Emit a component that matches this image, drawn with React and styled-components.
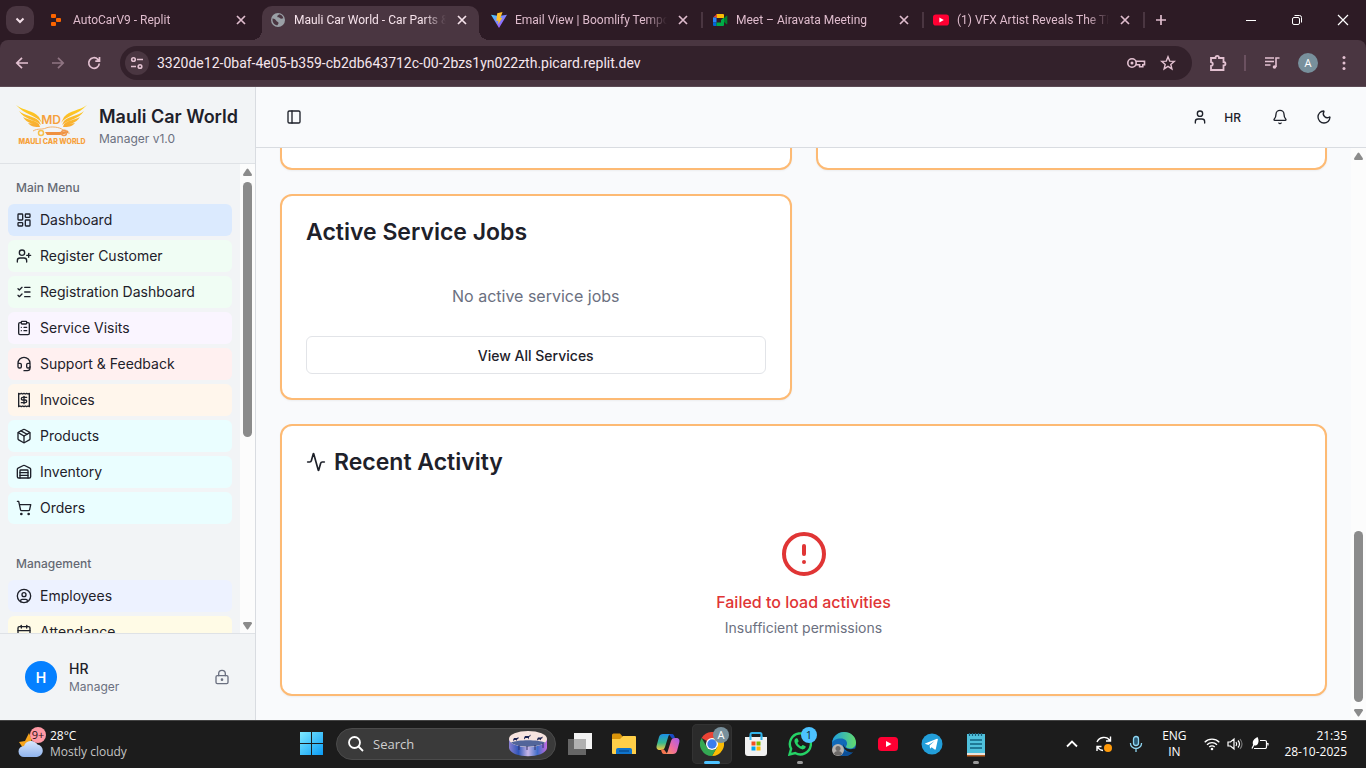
import React from "react";
import styled, { createGlobalStyle, css } from "styled-components";
import {
  LayoutDashboard, UserPlus, ListChecks, ClipboardList, Headset, Receipt, Package,
  Warehouse, ShoppingCart, CircleUser, Calendar, LockKeyhole, PanelLeft, User, Bell,
  Moon, Activity, CircleAlert,
} from "lucide-react";

const GlobalStyle = createGlobalStyle`
  *, *::before, *::after { box-sizing: border-box; }
  body { margin: 0; background: #1c1c1c; }
  h1, h2, p, ul { margin: 0; padding: 0; }
  ul { list-style: none; }
  button { border: 0; background: none; padding: 0; font: inherit; color: inherit; cursor: pointer; }
  a { color: inherit; text-decoration: none; }
  svg { display: block; flex: none; }
`;

const systemFont = `"Open Sans", "Noto Sans", sans-serif`;
const browserFont = `Roboto, "Open Sans", sans-serif`;
const appFont = `Inter, "Liberation Sans", sans-serif`;

const Screen = styled.div`
  display: flex;
  flex-direction: column;
  height: 100vh;
  overflow: hidden;
  background: #2d1b25;
  font-family: ${systemFont};
`;

/* ---------- browser chrome ---------- */

const TabStrip = styled.div`
  display: flex;
  align-items: center;
  flex: none;
  height: 40px;
  padding-left: 6px;
  background: #2d1b25;
  color: #dfbccd;
  font-family: ${browserFont};
`;

const TabSearch = styled.button`
  display: grid;
  place-items: center;
  width: 28px;
  height: 28px;
  margin-right: 7px;
  border-radius: 10px;
  background: #4a3641;
  color: #f3dfe8;
`;

const Tabs = styled.div`
  display: flex;
  align-self: flex-end;
  gap: 4px;
`;

const flare = css`
  content: "";
  position: absolute;
  bottom: 0;
  width: 10px;
  height: 10px;
`;

const TabItem = styled.div`
  position: relative;
  display: flex;
  align-items: center;
  gap: 8px;
  width: 217px;
  height: 34px;
  padding: 0 9px 6px 8px;
  border-radius: 10px 10px 0 0;
  font-size: 12px;
  ${({ $active }) =>
    $active
      ? css`
          background: #4a3641;
          color: #f6e3eb;
          &::before {
            ${flare}
            left: -10px;
            background: radial-gradient(circle at 0 0, transparent 10px, #4a3641 10px);
          }
          &::after {
            ${flare}
            right: -10px;
            background: radial-gradient(circle at 100% 0, transparent 10px, #4a3641 10px);
          }
        `
      : ""}
  ${({ $divided }) =>
    $divided
      ? css`
          &::after {
            content: "";
            position: absolute;
            right: -3px;
            top: 6px;
            width: 2px;
            height: 16px;
            background: #4a3641;
          }
        `
      : ""}
`;

const TabTitle = styled.span`
  flex: 1;
  min-width: 0;
  overflow: hidden;
  white-space: nowrap;
  line-height: 16px;
  mask-image: linear-gradient(to right, #000 calc(100% - 22px), transparent);
`;

const PlainButton = styled.button`
  display: grid;
  place-items: center;
  width: ${({ $w }) => $w || 28}px;
  height: ${({ $h }) => $h || 28}px;
  opacity: ${({ disabled }) => (disabled ? 0.45 : 1)};
`;

const NewTab = styled(PlainButton)`
  margin-left: 5px;
`;

const WindowControls = styled.div`
  display: flex;
  margin-left: auto;
  color: #fff;
`;

const Toolbar = styled.div`
  display: flex;
  align-items: center;
  flex: none;
  height: 47px;
  padding: 0 8px;
  border-bottom: 1px solid #5c4a54;
  border-radius: 8px 8px 0 0;
  background: #4a3641;
  color: #e3c1d1;
`;

const NavButtons = styled.div`
  display: flex;
  gap: 8px;
  margin-right: 12px;
`;

const Omnibox = styled.div`
  display: flex;
  align-items: center;
  flex: 1;
  height: 34px;
  padding: 0 12px 0 5px;
  border-radius: 17px;
  background: #33212b;
  gap: 8px;
`;

const SiteInfo = styled.button`
  display: grid;
  place-items: center;
  width: 24px;
  height: 24px;
  border-radius: 50%;
  background: #4a3641;
`;

const UrlInput = styled.input`
  flex: 1;
  min-width: 0;
  padding: 0;
  border: 0;
  outline: 0;
  background: none;
  color: #f6e6ed;
  font: 14px/20px ${browserFont};
`;

const OmniboxActions = styled.div`
  display: flex;
  gap: 8px;
`;

const ToolbarActions = styled.div`
  display: flex;
  align-items: center;
  gap: 8px;
  margin-left: 12px;
`;

const ToolbarDivider = styled.span`
  width: 2px;
  height: 16px;
  margin: 0 4px;
  background: #6b5160;
`;

const ProfileBadge = styled.span`
  display: grid;
  place-items: center;
  width: 20px;
  height: 20px;
  border-radius: 50%;
  background: #78909c;
  color: #fff;
  font-size: 11px;
  line-height: 20px;
`;

/* ---------- application ---------- */

const AppArea = styled.div`
  display: flex;
  flex: 1;
  min-height: 0;
  background: #f9fafc;
  color: #1e212a;
  font-family: ${appFont};
`;

const Sidebar = styled.aside`
  display: flex;
  flex-direction: column;
  flex: none;
  width: 256px;
  border-right: 1px solid #d9dce1;
  background: #f2f4f6;
`;

const Brand = styled.header`
  display: flex;
  align-items: center;
  gap: 11px;
  padding: 16px;
  border-bottom: 1px solid #dfe2e6;
  white-space: nowrap;
`;

const BrandName = styled.h1`
  font-size: 18px;
  line-height: 28px;
  font-weight: 600;
`;

const Caption = styled.p`
  font-size: 12px;
  line-height: 16px;
  color: #6b7080;
`;

const SidebarBody = styled.div`
  display: flex;
  flex: 1;
  min-height: 0;
`;

const MenuViewport = styled.nav`
  display: flex;
  flex-direction: column;
  flex: 1;
  gap: 8px;
  overflow: hidden;
`;

const MenuGroup = styled.section`
  flex: none;
  padding: 8px;
`;

const MenuHeading = styled.h2`
  padding: 0 8px;
  font-size: 12px;
  line-height: 32px;
  font-weight: 500;
  color: #656973;
`;

const MenuList = styled.ul`
  display: flex;
  flex-direction: column;
  gap: 4px;
`;

const MenuLink = styled.a`
  display: flex;
  align-items: center;
  gap: 8px;
  height: 32px;
  padding: 0 8px;
  border-radius: 6px;
  background: ${({ $tint }) => $tint};
  font-size: 14px;
  line-height: 20px;
`;

const Account = styled.footer`
  display: flex;
  align-items: center;
  gap: 12px;
  padding: 25px;
  border-top: 1px solid #dfe2e6;
`;

const Avatar = styled.span`
  display: grid;
  place-items: center;
  width: 32px;
  height: 32px;
  border-radius: 50%;
  background: #0580ff;
  color: #fff;
  font-size: 14px;
  font-weight: 600;
`;

const AccountText = styled.div`
  flex: 1;
`;

const AccountName = styled.p`
  font-size: 14px;
  line-height: 20px;
  font-weight: 500;
`;

const MutedButton = styled.button`
  color: #6b7080;
`;

const Workspace = styled.div`
  display: flex;
  flex-direction: column;
  flex: 1;
  min-width: 0;
`;

const TopBar = styled.header`
  display: flex;
  align-items: center;
  justify-content: space-between;
  flex: none;
  height: 61px;
  padding: 0 24px;
  border-bottom: 1px solid #d9dce1;
`;

const TopActions = styled.div`
  display: flex;
  align-items: center;
  gap: 8px;
`;

const UserButton = styled.button`
  display: flex;
  align-items: center;
  gap: 16px;
  height: 32px;
  padding: 0 13px;
  font-size: 12px;
  font-weight: 500;
`;

const WorkspaceBody = styled.div`
  display: flex;
  flex: 1;
  min-height: 0;
`;

const ContentViewport = styled.main`
  display: flex;
  flex-direction: column;
  justify-content: flex-end;
  flex: 1;
  gap: 24px;
  padding: 0 24px 24px;
  overflow: hidden;
`;

const CardGrid = styled.div`
  display: grid;
  flex: none;
  grid-template-columns: 1fr 1fr;
  gap: 24px;
`;

const Card = styled.section`
  flex: none;
  min-height: 206px;
  padding: 24px;
  border: 2px solid #fdba74;
  border-radius: 12px;
  background: #fff;
  box-shadow: 0 1px 2px rgba(0, 0, 0, 0.05);
`;

const CardTitle = styled.h2`
  display: flex;
  align-items: center;
  gap: 8px;
  margin-bottom: 24px;
  font-size: 23px;
  line-height: 24px;
  font-weight: 600;
`;

const EmptyText = styled.p`
  padding: 16px 0;
  margin-bottom: 12px;
  text-align: center;
  font-size: 16px;
  line-height: 24px;
  color: #6b7080;
`;

const OutlineButton = styled.button`
  width: 100%;
  height: 38px;
  border: 1px solid #e2e4e8;
  border-radius: 6px;
  font-size: 14px;
  font-weight: 500;
`;

const ErrorState = styled.div`
  display: flex;
  flex-direction: column;
  align-items: center;
  padding: 32px 0;
  color: #e03535;
`;

const ErrorTitle = styled.p`
  margin: 12px 0 4px;
  font-size: 16px;
  line-height: 24px;
  font-weight: 500;
`;

const ErrorDetail = styled.p`
  font-size: 14px;
  line-height: 20px;
  color: #6b7080;
`;

const ScrollTrack = styled.div`
  display: flex;
  flex-direction: column;
  align-items: center;
  flex: none;
  width: 15px;
  background: #fcfcfc;
  color: #8b8b8b;
`;

const ScrollArrow = styled.span`
  display: flex;
  flex-direction: column;
  justify-content: ${({ $end }) => ($end ? "flex-end" : "flex-start")};
  height: 18px;
  padding: 4px 0 3px;
`;

const ScrollSpace = styled.span`
  flex: ${({ $share }) => $share} 0 0;
`;

const ScrollThumb = styled.span`
  flex: ${({ $share }) => $share} 0 0;
  width: 9px;
  border-radius: 5px;
  background: #8b8b8b;
`;

/* ---------- desktop taskbar ---------- */

const Taskbar = styled.footer`
  display: flex;
  align-items: center;
  flex: none;
  height: 48px;
  box-shadow: inset 0 1px 0 #444;
  background: #1c1c1c;
  color: #fff;
  font-size: 12px;
  line-height: 16px;
`;

const Weather = styled.button`
  display: flex;
  align-items: center;
  gap: 4px;
  flex: 0 0 290px;
  padding-left: 18px;
  text-align: left;
`;

const WeatherDetail = styled.span`
  display: block;
  color: #c4c4c4;
`;

const TaskButtons = styled.div`
  display: flex;
  align-items: center;
`;

const TaskButton = styled.button`
  position: relative;
  display: grid;
  place-items: center;
  width: 40px;
  height: 40px;
  margin: 0 2px;
  border-radius: 5px;
  ${({ $current }) => ($current ? "background: #2b2b2b; box-shadow: inset 0 0 0 1px #333;" : "")}
`;

const RunningMark = styled.span`
  position: absolute;
  bottom: 0;
  width: ${({ $current }) => ($current ? 16 : 6)}px;
  height: 3px;
  border-radius: 2px;
  background: ${({ $current }) => ($current ? "#4cc2ff" : "#9a9a9a")};
`;

const CountBadge = styled.span`
  position: absolute;
  top: ${({ $top }) => $top}px;
  right: ${({ $right }) => $right}px;
  width: 16px;
  height: 16px;
  border-radius: 50%;
  background: ${({ $bg }) => $bg};
  color: ${({ $fg }) => $fg};
  font-size: 11px;
  line-height: 16px;
  text-align: center;
`;

const WeatherIcon = styled.span`
  position: relative;
  display: block;
  width: 28px;
`;

const TaskSearch = styled.label`
  display: flex;
  align-items: center;
  gap: 9px;
  width: 220px;
  height: 32px;
  margin: 0 2px;
  padding: 0 8px 0 11px;
  border: 1px solid #4b4b4b;
  border-radius: 16px;
  background: #3a3a3a;
`;

const TaskSearchInput = styled.input`
  flex: 1;
  min-width: 0;
  padding: 0;
  border: 0;
  outline: 0;
  background: none;
  color: #fff;
  font: 13px/20px ${systemFont};
  &::placeholder { color: #cfcfcf; opacity: 1; }
`;

const Tray = styled.div`
  display: flex;
  align-items: center;
  margin-left: auto;
  padding-right: 19px;
`;

const Language = styled.button`
  width: 40px;
  margin-left: 2px;
  text-align: center;
`;

const QuickSettings = styled.button`
  display: flex;
  align-items: center;
  gap: 7px;
  margin: 0 15px 0 10px;
`;

const Clock = styled.button`
  text-align: right;
`;

/* ---------- drawings ---------- */

const Line = ({ d, size = 16, w = 2, box = 16, children }) => (
  <svg width={size} height={size} viewBox={`0 0 ${box} ${box}`} fill="none" stroke="currentColor" strokeWidth={w}>
    {d && <path d={d} />}
    {children}
  </svg>
);

const CloseGlyph = () => <Line d="M4 4l8 8M12 4l-8 8" w={1.7} />;

const ReplitIcon = () => (
  <svg width="16" height="16" viewBox="0 0 16 16" fill="#fb6400">
    <rect x="2" y="2" width="5" height="4" rx="1" />
    <rect x="7" y="6" width="5" height="4" rx="1" />
    <rect x="2" y="10" width="5" height="4" rx="1" />
  </svg>
);

const GlobeIcon = () => (
  <svg width="16" height="16" viewBox="0 0 16 16">
    <circle cx="8" cy="8" r="7" fill="#9aa0a6" />
    <path d="M2.500 6.500c2 .2 3.500 1.300 4 2.500.4 1 1.800.6 2 1.800.2 1-.7 1.200-.9 2.500-2.800.2-5.500-2.300-5.100-6.800zM9 2.200c-.3 1-1.800 1.200-1.700 2.300.2 1.300 1.800.6 2.500 1.500.6.9 2 .7 3.500.3-.4-2.200-2-3.800-4.300-4.100z" fill="#4a3641" />
  </svg>
);

const ViteIcon = () => (
  <svg width="16" height="16" viewBox="0 0 18 18">
    <defs>
      <linearGradient id="vite" x1="0" y1="0" x2="1" y2="1">
        <stop offset="0" stopColor="#41d1ff" />
        <stop offset="1" stopColor="#bd34fe" />
      </linearGradient>
    </defs>
    <path d="M0 3l9 15 9-15-9 1.500z" fill="url(#vite)" />
    <path d="M13 0L7 1.500 6 10l2.500-.5-.6 4.500 5-7.500-2.500.4z" fill="#ffc22b" />
  </svg>
);

const MeetIcon = () => (
  <svg width="16" height="16" viewBox="0 0 16 16">
    <path d="M5 2h6a1 1 0 0 1 1 1v3H4.500V2z" fill="#fbbc04" />
    <path d="M5 2v3.500H1z" fill="#ea4335" />
    <path d="M1 5.500h3.500v5H1z" fill="#2684fc" />
    <path d="M1 10.500h3.500V14H2a1 1 0 0 1-1-1z" fill="#0066da" />
    <path d="M4.500 10.500h4.500V8l3-2.500V13a1 1 0 0 1-1 1H4.500z" fill="#00ac47" />
    <path d="M12 6l2.500-2.200c.4-.3.800-.1.800.3v7.800c0 .4-.4.600-.8.300L12 10z" fill="#00832d" />
  </svg>
);

const YouTubeIcon = ({ w = 16, h = 12 }) => (
  <svg width={w} height={h} viewBox="0 0 20 14">
    <rect width="20" height="14" rx="3.500" fill="#ff0033" />
    <path d="M8 4l5.500 3L8 10z" fill="#fff" />
  </svg>
);

const BrandLogo = () => (
  <svg width="72" height="44" viewBox="0 0 72 44" role="img" aria-label="Mauli Car World">
    <defs>
      <linearGradient id="wing" x1="0" y1="0" x2="0" y2="1">
        <stop offset="0" stopColor="#ffd21a" />
        <stop offset="1" stopColor="#f8ab35" />
      </linearGradient>
      <path
        id="wingShape"
        d="M0 2C8 8 17 7 23 14L26 20C20 12 9 12 0 2zM3 8c6 5 15 5 20 10l2 4C18 16 9 17 3 8zM7 14c5 3 12 3 16 7l1 3c-6-4-13-3-17-10zM12 20c4 1 8 1 11 3l1 1c-5 0-9 0-12-4z"
      />
    </defs>
    <use href="#wingShape" fill="url(#wing)" />
    <use href="#wingShape" fill="url(#wing)" transform="translate(71 0) scale(-1 1)" />
    <text x="35" y="21" textAnchor="middle" fontFamily="Inter, sans-serif" fontSize="12" fontWeight="600" fill="#f5a03c">MD</text>
    <path d="M17 28c5-3 9-1 13-3 5-2 14-1 17 2 4 0 6 1 6 4" fill="none" stroke="#f5b168" strokeWidth="1" />
    <path d="M29 29h14l9-1v2l-8 2H31z" fill="#ef9140" />
    <circle cx="25" cy="30" r="2.500" fill="none" stroke="#f5c04a" strokeWidth="1.500" />
    <circle cx="48" cy="30" r="2.500" fill="none" stroke="#f09a50" strokeWidth="1.500" />
    <text x="36" y="41" textAnchor="middle" fontFamily="Inter, sans-serif" fontSize="7" fontWeight="800" fill="#f7a13a">MAULI CAR WORLD</text>
  </svg>
);

const CloudIcon = () => (
  <svg width="28" height="30" viewBox="0 0 28 30">
    <defs>
      <linearGradient id="cloud" x1="0" y1="0" x2="0" y2="1">
        <stop offset="0" stopColor="#d9e6fb" />
        <stop offset="1" stopColor="#8fb4ee" />
      </linearGradient>
    </defs>
    <path d="M11 4l2.500 6-1 8L5 19l-4-6 6-1z" fill="#f6a41c" />
    <path d="M6 28a5.500 5.500 0 0 1 0-11 7.500 7.500 0 0 1 13.500-1.500A6.300 6.300 0 0 1 19 28z" fill="url(#cloud)" />
  </svg>
);

const StartIcon = () => (
  <svg width="24" height="24" viewBox="0 0 24 24">
    <defs>
      <linearGradient id="start" x1="0" y1="0" x2="1" y2="1">
        <stop offset="0" stopColor="#7eeaff" />
        <stop offset="1" stopColor="#0a9bf5" />
      </linearGradient>
    </defs>
    <path d="M0 0h11v11H0zM12 0h11v11H12zM0 12h11v11H0zM12 12h11v11H12z" fill="url(#start)" />
  </svg>
);

const DrumIcon = () => (
  <svg width="38" height="26" viewBox="0 0 38 26">
    <defs>
      <linearGradient id="drum" x1="0" y1="0" x2="1" y2="0">
        <stop offset="0" stopColor="#8a7fd0" />
        <stop offset="0.250" stopColor="#2f55b8" />
        <stop offset="0.500" stopColor="#c8b6e6" />
        <stop offset="0.750" stopColor="#3f6cc8" />
        <stop offset="1" stopColor="#c36be0" />
      </linearGradient>
    </defs>
    <path d="M0 8v9c2 11 36 11 38 0V8z" fill="url(#drum)" />
    <ellipse cx="19" cy="8" rx="19" ry="8" fill="#f7e4df" />
    <path d="M2 11.500C9 8.500 29 8.500 36 11.500 30 17 8 17 2 11.500z" fill="#52659a" />
    <path d="M4 9l1-2h3l1.500-1v1.500L8 8.500V10L7 9H5.500L4.500 10zM15 7l1-2h4l1.500-1.500V5L20 6v2.500L19 7h-2.500L15 8.500zM28 8.500l1-2h3l1.500-1v1.500L32 8v1.500L31 8.500h-1.500l-1 1z" fill="#1b2250" />
    <path d="M10 14v5M18 15v4M26 14v5M34 12v5" stroke="#30326a" strokeWidth="1" />
  </svg>
);

const TaskViewIcon = () => (
  <svg width="24" height="22" viewBox="0 0 24 22">
    <rect x="6" y="0" width="18" height="16" fill="#f3f3f3" />
    <rect x="0" y="6" width="18" height="16" fill="#666" />
    <rect x="6" y="6" width="12" height="10" fill="#b0b0b0" />
  </svg>
);

const FolderIcon = () => (
  <svg width="24" height="22" viewBox="0 0 24 22">
    <path d="M0 2a1.500 1.500 0 0 1 1.500-1.500H8L11 4v5H0z" fill="#d9940a" />
    <path d="M0 6h8l3-3h12a1 1 0 0 1 1 1v17H1a1 1 0 0 1-1-1z" fill="#ffcf48" />
    <path d="M4 21v-4a2 2 0 0 1 2-2h12a2 2 0 0 1 2 2v4z" fill="#0f74cc" />
    <path d="M7 18h10" stroke="#0a4f95" strokeWidth="1.500" />
  </svg>
);

const CopilotIcon = () => (
  <svg width="24" height="24" viewBox="0 0 24 24">
    <defs>
      <linearGradient id="copA" x1="0" y1="0" x2="0" y2="1">
        <stop offset="0" stopColor="#1b8fe8" />
        <stop offset="0.550" stopColor="#36b98f" />
        <stop offset="1" stopColor="#f5c93c" />
      </linearGradient>
      <linearGradient id="copB" x1="1" y1="0" x2="0" y2="1">
        <stop offset="0" stopColor="#a45cf0" />
        <stop offset="0.550" stopColor="#ef6aa0" />
        <stop offset="1" stopColor="#fb9a55" />
      </linearGradient>
    </defs>
    <path d="M14 2h2c1.700 0 2.300 1.500 3 4.500h-3l-3-4z" fill="#1a4bc4" />
    <path d="M7 2h8c-1.500 0-2.200 1-2.700 2.500L9 15c-.7 2-1.500 3-4 3H4c-3 0-4-2-3.300-4.500L3 5c.6-2 2-3 4-3z" fill="url(#copA)" />
    <path d="M10 22H8c-1.700 0-2.300-1.500-3-4.500h3l3 4z" fill="#f4744e" />
    <path d="M17 22H9c1.500 0 2.200-1 2.700-2.500L15 9c.7-2 1.500-3 4-3h1c3 0 4 2 3.300 4.500L21 19c-.6 2-2 3-4 3z" fill="url(#copB)" />
  </svg>
);

const ChromeIcon = () => (
  <svg width="24" height="24" viewBox="0 0 24 24">
    <path d="M12 12L1.600 6A12 12 0 0 1 22.400 6H12z" fill="#ea4335" />
    <path d="M12 12L12 6h10.400A12 12 0 0 1 12 24l5.200-9z" fill="#fbbc04" />
    <path d="M1.600 6A12 12 0 0 0 12 24l5.200-9A6 6 0 0 1 6.800 15z" fill="#34a853" />
    <circle cx="12" cy="12" r="6" fill="#fff" />
    <circle cx="12" cy="12" r="4.700" fill="#3b7ded" />
  </svg>
);

const StoreIcon = () => (
  <svg width="24" height="24" viewBox="0 0 24 24">
    <path d="M6.500 7V2.500A1.500 1.500 0 0 1 8 1h8a1.500 1.500 0 0 1 1.500 1.500V7" fill="none" stroke="#31b3ea" strokeWidth="2" />
    <path d="M1 5h22v16a3 3 0 0 1-3 3H4a3 3 0 0 1-3-3z" fill="#f1f1f1" />
    <path d="M7.500 9.500h4v4h-4z" fill="#f25022" />
    <path d="M12.500 9.500h4v4h-4z" fill="#7fba00" />
    <path d="M7.500 14.500h4v4h-4z" fill="#00a4ef" />
    <path d="M12.500 14.500h4v4h-4z" fill="#ffb900" />
    <path d="M6.500 4v4M17.500 4v4" stroke="#31b3ea" strokeWidth="2" />
  </svg>
);

const WhatsAppIcon = () => (
  <svg width="24" height="24" viewBox="0 0 24 24">
    <path d="M1.500 22.500l1.600-5.700A10.500 10.500 0 1 1 7.200 21z" fill="none" stroke="#25d366" strokeWidth="2.400" />
    <path d="M8.300 6.300c-.5 0-1.900 1-1.900 2.800 0 3.500 5 8.300 8.200 8.300 1.900 0 3.200-1.300 3.200-2.800 0-.4-2.600-1.700-3.100-1.700-.6 0-1 1.400-1.500 1.400-.8 0-3.700-2.700-3.700-3.400 0-.4 1.100-1 1.100-1.600 0-.5-1-3-1.400-3z" fill="#25d366" />
  </svg>
);

const EdgeIcon = () => (
  <svg width="24" height="24" viewBox="0 0 24 24">
    <defs>
      <linearGradient id="edgeTop" x1="0" y1="0" x2="1" y2="0">
        <stop offset="0" stopColor="#1e9fe0" />
        <stop offset="1" stopColor="#63db6c" />
      </linearGradient>
    </defs>
    <circle cx="12" cy="12" r="12" fill="#1169b8" />
    <path d="M0 11C1 4 6 0 12 0c7 0 12 5 12 10.500 0 4-3 6-6 6-2.500 0-4-1-4-2s1-1 1-3c0-2.500-2-5-6-5-5 0-8 2-9 4.500z" fill="url(#edgeTop)" />
    <path d="M9 12c-1 5 4 9 9 7.500 2-.6 3.500-1 4.300-1.500C20 22 17 24 12 24 6 23 5 15 9 12z" fill="#0c4f97" />
    <path d="M11.500 12c0 4 5 6.500 11 4.500l1 .5c1 1-1.500 3-3 3.500-6 0-10-4-9-8.500z" fill="#1c1c1c" />
    <circle cx="6" cy="18" r="6" fill="#b7b3b0" />
    <circle cx="6" cy="16.500" r="2.500" fill="#6d6a68" />
    <path d="M2 22c0-4 8-4 8 0-2 2-6 2-8 0z" fill="#6d6a68" />
  </svg>
);

const TelegramIcon = () => (
  <svg width="22" height="22" viewBox="0 0 22 22">
    <circle cx="11" cy="11" r="10.500" fill="#229ed9" />
    <path d="M4 10.500l12-4.700c.6-.2 1 .1.800.9l-2 9.300c-.2.700-.6.800-1.200.5l-3-2.200-1.500 1.400-.5-3.200 5-4.500-6.200 3.900-2.900-.9c-.5-.1-.6-.3-.5-.5z" fill="#fff" />
  </svg>
);

const NotepadIcon = () => (
  <svg width="20" height="25" viewBox="0 0 20 25">
    <rect x="1" y="2" width="18" height="20" fill="#4fc0dc" />
    <rect x="1" y="21" width="18" height="3" fill="#e9e3dc" />
    <rect x="1" y="23" width="18" height="1.500" fill="#b65d20" />
    <path d="M3.500 1v3M6.500 1v3M9.500 1v3M12.500 1v3M15.500 1v3" stroke="#1a5f7c" strokeWidth="1.200" />
    <path d="M4 8h12M4 12h12M4 16h12" stroke="#12607f" strokeWidth="1.500" />
  </svg>
);

/* ---------- data ---------- */

const tabs = [
  { title: "AutoCarV9 - Replit", icon: <ReplitIcon /> },
  { title: "Mauli Car World - Car Parts & Service", icon: <GlobeIcon />, active: true },
  { title: "Email View | Boomlify Temporary", icon: <ViteIcon />, divided: true },
  { title: "Meet – Airavata Meeting", icon: <MeetIcon />, divided: true },
  { title: "(1) VFX Artist Reveals The TRUE", icon: <YouTubeIcon />, divided: true },
];

const menu = [
  {
    heading: "Main Menu",
    items: [
      { label: "Dashboard", icon: LayoutDashboard, tint: "#dbeafe" },
      { label: "Register Customer", icon: UserPlus, tint: "#f0fdf4" },
      { label: "Registration Dashboard", icon: ListChecks, tint: "#f0fdf4" },
      { label: "Service Visits", icon: ClipboardList, tint: "#faf5ff" },
      { label: "Support & Feedback", icon: Headset, tint: "#fff0f0" },
      { label: "Invoices", icon: Receipt, tint: "#fff6ec" },
      { label: "Products", icon: Package, tint: "#eafeff" },
      { label: "Inventory", icon: Warehouse, tint: "#eafeff" },
      { label: "Orders", icon: ShoppingCart, tint: "#eafeff" },
    ],
  },
  {
    heading: "Management",
    items: [
      { label: "Employees", icon: CircleUser, tint: "#edf2ff" },
      { label: "Attendance", icon: Calendar, tint: "#fffbe6" },
    ],
  },
];

const pinnedApps = [
  { name: "Task view", icon: <TaskViewIcon /> },
  { name: "File Explorer", icon: <FolderIcon /> },
  { name: "Copilot", icon: <CopilotIcon /> },
  { name: "Chrome", icon: <ChromeIcon />, current: true, running: true, badge: { text: "A", bg: "#78909c", fg: "#fff", top: 3, right: 3 } },
  { name: "Store", icon: <StoreIcon /> },
  { name: "WhatsApp", icon: <WhatsAppIcon />, running: true, badge: { text: "1", bg: "#4cc2ff", fg: "#10222e", top: 3, right: 3 } },
  { name: "Edge", icon: <EdgeIcon /> },
  { name: "YouTube", icon: <YouTubeIcon w={20} h={14} /> },
  { name: "Telegram", icon: <TelegramIcon /> },
  { name: "Notepad", icon: <NotepadIcon />, running: true },
];

/* ---------- composed parts ---------- */

const Scrollbar = ({ before, thumb, after }) => (
  <ScrollTrack aria-hidden="true">
    <ScrollArrow>
      <svg width="9" height="8" viewBox="0 0 9 8" fill="currentColor"><path d="M3.700 1q.8-1 1.600 0L9 6.500Q9 8 8 8H1Q0 8 0 6.500z" /></svg>
    </ScrollArrow>
    <ScrollSpace $share={before} />
    <ScrollThumb $share={thumb} />
    <ScrollSpace $share={after} />
    <ScrollArrow $end>
      <svg width="9" height="8" viewBox="0 0 9 8" fill="currentColor"><path d="M3.700 7q.8 1 1.600 0L9 1.500Q9 0 8 0H1Q0 0 0 1.500z" /></svg>
    </ScrollArrow>
  </ScrollTrack>
);

const BrowserChrome = () => (
  <>
    <TabStrip>
      <TabSearch aria-label="Search tabs"><Line d="M4.500 6.500L8 10l3.500-3.500" /></TabSearch>
      <Tabs>
        {tabs.map((t) => (
          <TabItem key={t.title} $active={t.active} $divided={t.divided}>
            {t.icon}
            <TabTitle>{t.title}</TabTitle>
            <PlainButton $w={16} $h={16} aria-label="Close tab"><CloseGlyph /></PlainButton>
          </TabItem>
        ))}
      </Tabs>
      <NewTab aria-label="New tab"><Line d="M8 3v10M3 8h10" w={1.700} /></NewTab>
      <WindowControls>
        <PlainButton $w={46} $h={40} aria-label="Minimize"><Line d="M3 8.500h10" w={1} /></PlainButton>
        <PlainButton $w={46} $h={40} aria-label="Restore">
          <Line w={1}>
            <rect x="3.500" y="5.500" width="7" height="7" rx="1.500" />
            <path d="M5.500 3.500h5a2 2 0 0 1 2 2v5" />
          </Line>
        </PlainButton>
        <PlainButton $w={46} $h={40} aria-label="Close"><Line d="M3 3l10 10M13 3L3 13" w={1.200} /></PlainButton>
      </WindowControls>
    </TabStrip>
    <Toolbar>
      <NavButtons>
        <PlainButton aria-label="Back"><Line d="M14 8H3M8 2.800L2.800 8 8 13.200" w={1.700} /></PlainButton>
        <PlainButton aria-label="Forward" disabled><Line d="M2 8h11M8 2.800L13.200 8 8 13.200" w={1.700} /></PlainButton>
        <PlainButton aria-label="Reload"><Line d="M13.300 8.500A5.300 5.300 0 1 1 11.800 4.300L13.500 6M13.500 2v4.200H9.300" w={1.700} /></PlainButton>
      </NavButtons>
      <Omnibox>
        <SiteInfo aria-label="Site information">
          <Line w={1.600}>
            <circle cx="4.500" cy="4.500" r="1.800" />
            <path d="M8 4.500h6M2 11.500h5" />
            <circle cx="11" cy="11.500" r="1.800" />
          </Line>
        </SiteInfo>
        <UrlInput aria-label="Address" readOnly value="3320de12-0baf-4e05-b359-cb2db643712c-00-2bzs1yn022zth.picard.replit.dev" />
        <OmniboxActions>
          <PlainButton $w={24} aria-label="Passwords">
            <Line size={20} box={20} w={1.600}>
              <circle cx="6" cy="10" r="4.200" />
              <circle cx="6" cy="10" r="1.500" fill="currentColor" stroke="none" />
              <path d="M10 8.300h8.500v3.500h-1.700v2h-3.200v-2H10" />
            </Line>
          </PlainButton>
          <PlainButton $w={24} aria-label="Bookmark">
            <Line d="M8 1.800l1.700 4.300 4.600.3-3.500 3 1.100 4.500L8 11.400l-3.900 2.500 1.100-4.500-3.500-3 4.600-.3z" w={1.400} />
          </PlainButton>
        </OmniboxActions>
      </Omnibox>
      <ToolbarActions>
        <PlainButton aria-label="Extensions">
          <Line size={18} box={18} w={1.800} d="M2 4h4.500c0-2.800 3.500-2.800 3.500 0h4.500v4c2.600 0 2.600 3.500 0 3.500V16H2v-4c2.500-.5 2.500-3.500 0-4z" />
        </PlainButton>
        <ToolbarDivider />
        <PlainButton aria-label="Media controls">
          <Line w={1.600}>
            <path d="M1 3h9M1 6.500h9M1 10h5.500M12 12V3h3.500" />
            <circle cx="10.500" cy="12" r="1.800" fill="currentColor" stroke="none" />
          </Line>
        </PlainButton>
        <PlainButton aria-label="Profile"><ProfileBadge>A</ProfileBadge></PlainButton>
        <PlainButton aria-label="Menu">
          <svg width="16" height="16" viewBox="0 0 16 16" fill="currentColor">
            <circle cx="8" cy="2.500" r="1.500" /><circle cx="8" cy="8" r="1.500" /><circle cx="8" cy="13.500" r="1.500" />
          </svg>
        </PlainButton>
      </ToolbarActions>
    </Toolbar>
  </>
);

const SidebarPanel = () => (
  <Sidebar>
    <Brand>
      <BrandLogo />
      <div>
        <BrandName>Mauli Car World</BrandName>
        <Caption>Manager v1.0</Caption>
      </div>
    </Brand>
    <SidebarBody>
      <MenuViewport>
        {menu.map((group) => (
          <MenuGroup key={group.heading}>
            <MenuHeading>{group.heading}</MenuHeading>
            <MenuList>
              {group.items.map(({ label, icon: Icon, tint }) => (
                <li key={label}>
                  <MenuLink href="#" $tint={tint}><Icon size={16} />{label}</MenuLink>
                </li>
              ))}
            </MenuList>
          </MenuGroup>
        ))}
      </MenuViewport>
      <Scrollbar before={0} thumb={255} after={178} />
    </SidebarBody>
    <Account>
      <Avatar>H</Avatar>
      <AccountText>
        <AccountName>HR</AccountName>
        <Caption>Manager</Caption>
      </AccountText>
      <MutedButton aria-label="Change password"><LockKeyhole size={16} /></MutedButton>
    </Account>
  </Sidebar>
);

const WorkspacePanel = () => (
  <Workspace>
    <TopBar>
      <PlainButton aria-label="Toggle sidebar"><PanelLeft size={16} /></PlainButton>
      <TopActions>
        <UserButton><User size={16} />HR</UserButton>
        <PlainButton $w={36} $h={36} aria-label="Notifications"><Bell size={16} /></PlainButton>
        <PlainButton $w={36} $h={36} aria-label="Dark mode"><Moon size={16} /></PlainButton>
      </TopActions>
    </TopBar>
    <WorkspaceBody>
      <ContentViewport>
        <CardGrid>
          <Card />
          <Card />
          <Card>
            <CardTitle>Active Service Jobs</CardTitle>
            <EmptyText>No active service jobs</EmptyText>
            <OutlineButton>View All Services</OutlineButton>
          </Card>
        </CardGrid>
        <Card>
          <CardTitle><Activity size={20} />Recent Activity</CardTitle>
          <ErrorState>
            <CircleAlert size={48} />
            <ErrorTitle>Failed to load activities</ErrorTitle>
            <ErrorDetail>Insufficient permissions</ErrorDetail>
          </ErrorState>
        </Card>
      </ContentViewport>
      <Scrollbar before={365} thumb={171} after={0} />
    </WorkspaceBody>
  </Workspace>
);

const DesktopTaskbar = () => (
  <Taskbar>
    <Weather>
      <WeatherIcon>
        <CloudIcon />
        <CountBadge $bg="#ff99a4" $fg="#2a1014" $top={-2} $right={0}>9+</CountBadge>
      </WeatherIcon>
      <span>
        28°C
        <WeatherDetail>Mostly cloudy</WeatherDetail>
      </span>
    </Weather>
    <TaskButtons>
      <TaskButton aria-label="Start"><StartIcon /></TaskButton>
      <TaskSearch>
        <Line w={1.800}><circle cx="6.500" cy="6.500" r="5.500" /><path d="M10.500 10.500L15 15" /></Line>
        <TaskSearchInput placeholder="Search" aria-label="Search" />
        <DrumIcon />
      </TaskSearch>
      {pinnedApps.map((app) => (
        <TaskButton key={app.name} aria-label={app.name} $current={app.current}>
          {app.icon}
          {app.badge && (
            <CountBadge $bg={app.badge.bg} $fg={app.badge.fg} $top={app.badge.top} $right={app.badge.right}>
              {app.badge.text}
            </CountBadge>
          )}
          {app.running && <RunningMark $current={app.current} />}
        </TaskButton>
      ))}
    </TaskButtons>
    <Tray>
      <PlainButton $w={32} aria-label="Hidden icons"><Line d="M3 10.500l5-5 5 5" w={1.800} /></PlainButton>
      <PlainButton $w={32} aria-label="Updates">
        <Line size={18} box={18} w={1.400}>
          <path d="M2 7a7.500 7.500 0 0 1 13-1.500M15.500 1.500v4.500H11M8 15.500A7 7 0 0 1 2.500 12M2 16v-4.500h4.500" />
          <circle cx="13" cy="13" r="4" fill="#ff9a0a" stroke="none" />
        </Line>
      </PlainButton>
      <PlainButton $w={32} aria-label="Microphone">
        <svg width="16" height="18" viewBox="0 0 16 18" fill="none" stroke="#8fd6f2" strokeWidth="1.300">
          <rect x="5.500" y="1.500" width="5" height="9" rx="2.500" fill="#2b5a74" />
          <path d="M2.500 8v.5a5.500 5 0 0 0 11 0V8M8 13.500V17" />
        </svg>
      </PlainButton>
      <Language>ENG<br />IN</Language>
      <QuickSettings aria-label="Quick settings">
        <svg width="16" height="16" viewBox="0 0 16 16" fill="none" stroke="#fff" strokeWidth="1.300">
          <path d="M.7 6.200a10.300 10.300 0 0 1 14.600 0M3 8.700a7 7 0 0 1 10 0M5.300 11a3.800 3.800 0 0 1 5.400 0" />
          <circle cx="8" cy="13" r="1.300" fill="#fff" stroke="none" />
        </svg>
        <svg width="17" height="16" viewBox="0 0 17 16" fill="none" stroke="#fff" strokeWidth="1.200">
          <path d="M1 6h2.500L7 3v10l-3.500-3H1zM9 6q1.500 2 0 4M11 4.500q3 3.500 0 7" />
          <path d="M13 3q4 5 0 10" stroke="#777" />
        </svg>
        <svg width="18" height="16" viewBox="0 0 18 16" fill="none" stroke="#fff" strokeWidth="1.200">
          <path d="M9 4.500h5a1.500 1.500 0 0 1 1.500 1.500v5a1.500 1.500 0 0 1-1.500 1.500H3M16 7.500h1v2" />
          <path d="M6.500 1C3 3 1 5 2 8.500c1 1.500 4 1.500 5-1C8 5 7.500 3 6.500 1z" fill="#fff" stroke="none" />
          <path d="M1 12.500l2.500-5" />
        </svg>
      </QuickSettings>
      <Clock>21:35<br />28-10-2025</Clock>
    </Tray>
  </Taskbar>
);

export default function App() {
  return (
    <Screen>
      <GlobalStyle />
      <BrowserChrome />
      <AppArea>
        <SidebarPanel />
        <WorkspacePanel />
      </AppArea>
      <DesktopTaskbar />
    </Screen>
  );
}
